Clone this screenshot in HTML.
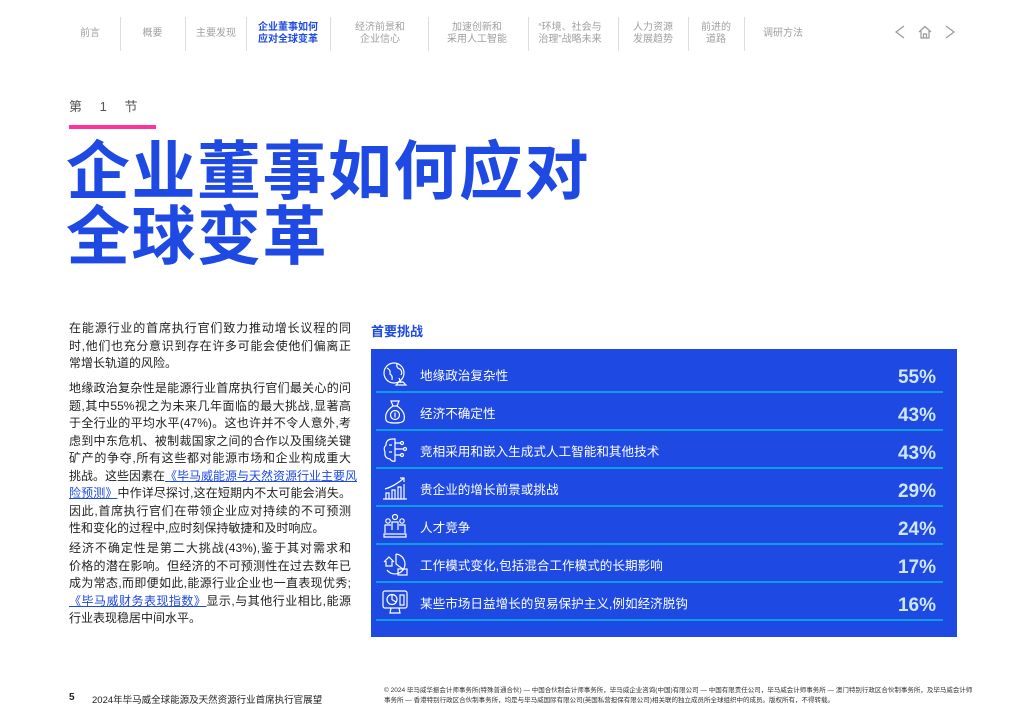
<!DOCTYPE html>
<html><head><meta charset="utf-8"><style>
*{margin:0;padding:0;box-sizing:border-box}
body{width:1024px;height:724px;background:#fff;position:relative;overflow:hidden;font-family:"Liberation Sans","Noto Sans CJK SC",sans-serif;color:#222}
.nav{position:absolute;top:17px;height:34px;font-size:10px;color:#a0a0a0;text-align:center;line-height:12.5px;display:flex;align-items:center;justify-content:center}
.dv{position:absolute;top:17px;width:1px;height:34px;background:#ddd}
.act{color:#1e49e2;font-weight:bold}
.sec{position:absolute;left:69px;top:96px;font-size:13px;color:#555;letter-spacing:7px}
.pink{position:absolute;left:69px;top:125px;width:87px;height:4px;background:#ff3399}
.title{position:absolute;left:66px;top:140px;font-size:64px;line-height:65px;font-weight:bold;color:#1e49e2;letter-spacing:1.5px}
.body{position:absolute;left:69px;width:282px;font-size:12px;line-height:17.5px;color:#222}
.body div{text-align:justify;text-align-last:justify;white-space:nowrap}
.body div.l{text-align-last:left}
.body a{color:#1e49e2;text-decoration:underline}
.sub{position:absolute;left:371px;top:321px;font-size:13px;font-weight:bold;color:#1e49e2}
.tbl{position:absolute;left:371px;top:349px;width:586px;height:288px;background:#1e49e2}
.row{position:absolute;left:5px;width:567px;height:38px;border-bottom:2px solid #0f9be8}
.row .t{position:absolute;left:44px;top:10px;font-size:12.6px;color:#fff}
.row .p{position:absolute;right:7px;top:12px;font-size:19px;font-weight:bold;color:#cfe6ff}
.row svg{position:absolute;left:5px;top:5px}
.foot{position:absolute;top:692px;font-size:9px;color:#222}
</style></head><body>
<div class="nav" style="left:70px;width:40px">前言</div><div class="dv" style="left:120px"></div>
<div class="nav" style="left:130px;width:45px">概要</div><div class="dv" style="left:185px"></div>
<div class="nav" style="left:190px;width:52px">主要发现</div><div class="dv" style="left:246px"></div>
<div class="nav act" style="left:250px;width:76px">企业董事如何<br>应对全球变革</div><div class="dv" style="left:330px"></div>
<div class="nav" style="left:340px;width:80px">经济前景和<br>企业信心</div><div class="dv" style="left:428px"></div>
<div class="nav" style="left:432px;width:90px">加速创新和<br>采用人工智能</div><div class="dv" style="left:528px"></div>
<div class="nav" style="left:530px;width:80px">“环境、社会与<br>治理”战略未来</div><div class="dv" style="left:618px"></div>
<div class="nav" style="left:622px;width:62px">人力资源<br>发展趋势</div><div class="dv" style="left:688px"></div>
<div class="nav" style="left:692px;width:48px">前进的<br>道路</div><div class="dv" style="left:744px"></div>
<div class="nav" style="left:755px;width:56px">调研方法</div>
<svg style="position:absolute;left:892px;top:23px" width="70" height="18" viewBox="0 0 70 18" fill="none" stroke="#999" stroke-width="1.2"><path d="M12 3 L4 9 L12 15"/><path d="M27 9 L33 3.5 L39 9 M29 8 V15 H37 V8 M31.5 15 V11 H34.5 V15"/><path d="M54 3 L62 9 L54 15"/></svg>
<div class="sec">第 1 节</div>
<div class="pink"></div>
<div class="title">企业董事如何应对<br>全球变革</div>
<div class="body" style="top:320px">
<div>在能源行业的首席执行官们致力推动增长议程的同</div>
<div>时,他们也充分意识到存在许多可能会使他们偏离正</div>
<div class="l">常增长轨道的风险。</div>
</div>
<div class="body" style="top:380px">
<div>地缘政治复杂性是能源行业首席执行官们最关心的问</div>
<div>题,其中55%视之为未来几年面临的最大挑战,显著高</div>
<div>于全行业的平均水平(47%)。这也许并不令人意外,考</div>
<div>虑到中东危机、被制裁国家之间的合作以及围绕关键</div>
<div>矿产的争夺,所有这些都对能源市场和企业构成重大</div>
<div>挑战。这些因素在<a>《毕马威能源与天然资源行业主要风</a></div>
<div><a>险预测》</a>中作详尽探讨,这在短期内不太可能会消失。</div>
<div>因此,首席执行官们在带领企业应对持续的不可预测</div>
<div class="l">性和变化的过程中,应时刻保持敏捷和及时响应。</div>
</div>
<div class="body" style="top:540px">
<div>经济不确定性是第二大挑战(43%),鉴于其对需求和</div>
<div>价格的潜在影响。但经济的不可预测性在过去数年已</div>
<div>成为常态,而即便如此,能源行业企业也一直表现优秀;</div>
<div><a>《毕马威财务表现指数》</a>显示,与其他行业相比,能源</div>
<div class="l">行业表现稳居中间水平。</div>
</div>
<div class="sub">首要挑战</div>
<div class="tbl">
<div class="row" style="top:6px"><svg width="28" height="28" viewBox="0 0 28 28" fill="none" stroke="#fff" stroke-width="1.2"><circle cx="13" cy="13" r="10"/><path d="M6 8 Q10 10 9 14 Q12 16 11 20 M16 4 Q15 8 19 9 Q22 12 20 15"/><path d="M18 18 L20 23 M15 25 H25 L22 22 H18 Z"/></svg><span class="t">地缘政治复杂性</span><span class="p">55%</span></div>
<div class="row" style="top:44px"><svg width="28" height="28" viewBox="0 0 28 28" fill="none" stroke="#fff" stroke-width="1.2"><path d="M10 3 H18 L16 8 H12 Z"/><path d="M12 8 Q3 14 5 22 Q6 25 14 25 Q22 25 23 22 Q25 14 16 8"/><circle cx="14" cy="17" r="4.5"/><path d="M14 14.5 V19.5"/></svg><span class="t">经济不确定性</span><span class="p">43%</span></div>
<div class="row" style="top:82px"><svg width="28" height="28" viewBox="0 0 28 28" fill="none" stroke="#fff" stroke-width="1.2"><path d="M12 3 Q5 3 5 9 Q2 12 4 16 Q3 22 9 23 Q11 26 14 25 V3 Z"/><path d="M14 7 H19 M14 13 H22 M14 19 H19 M8 9 H11 M8 16 H11"/><circle cx="21" cy="7" r="1.5"/><circle cx="24" cy="13" r="1.5"/><circle cx="21" cy="19" r="1.5"/></svg><span class="t">竞相采用和嵌入生成式人工智能和其他技术</span><span class="p">43%</span></div>
<div class="row" style="top:120px"><svg width="28" height="28" viewBox="0 0 28 28" fill="none" stroke="#fff" stroke-width="1.2"><path d="M2 25 H26 M5 25 V19 H8 V25 M11 25 V16 H14 V25 M17 25 V13 H20 V25 M23 25 V10"/><path d="M4 15 Q14 12 23 4 M19 4 H23 V8"/></svg><span class="t">贵企业的增长前景或挑战</span><span class="p">29%</span></div>
<div class="row" style="top:158px"><svg width="28" height="28" viewBox="0 0 28 28" fill="none" stroke="#fff" stroke-width="1.2"><circle cx="14" cy="5" r="2.5"/><circle cx="7" cy="9" r="2.2"/><circle cx="21" cy="9" r="2.2"/><path d="M11 18 V10 H17 V18 M4 21 V13 H10 M18 13 H24 V21 M3 22 H25 V25 H3 Z"/></svg><span class="t">人才竞争</span><span class="p">24%</span></div>
<div class="row" style="top:196px"><svg width="28" height="28" viewBox="0 0 28 28" fill="none" stroke="#fff" stroke-width="1.2"><path d="M15 4 A10 10 0 1 1 6 20"/><path d="M15 4 V14 L23 20"/><path d="M3 12 L8 7 L13 12 M5 11 V16 H11 V11"/><rect x="17" y="19" width="9" height="6"/></svg><span class="t">工作模式变化,包括混合工作模式的长期影响</span><span class="p">17%</span></div>
<div class="row" style="top:234px"><svg width="28" height="28" viewBox="0 0 28 28" fill="none" stroke="#fff" stroke-width="1.2"><rect x="2" y="3" width="24" height="17" rx="2"/><path d="M10 20 L9 25 H19 L18 20"/><circle cx="11" cy="11.5" r="5"/><path d="M11 6.5 V11.5 L15 14"/><rect x="19" y="7" width="4" height="10"/></svg><span class="t">某些市场日益增长的贸易保护主义,例如经济脱钩</span><span class="p">16%</span></div>
</div>
<div class="foot" style="left:69px;font-size:10px;font-weight:bold">5</div>
<div class="foot" style="left:92px;font-size:9.5px">2024年毕马威全球能源及天然资源行业首席执行官展望</div>
<div class="foot" style="left:384px;top:686px;font-size:6.5px;line-height:10px;width:590px;color:#333">© 2024 毕马威华振会计师事务所(特殊普通合伙) — 中国合伙制会计师事务所，毕马威企业咨询(中国)有限公司 — 中国有限责任公司，毕马威会计师事务所 — 澳门特别行政区合伙制事务所，及毕马威会计师事务所 — 香港特别行政区合伙制事务所，均是与毕马威国际有限公司(英国私营担保有限公司)相关联的独立成员所全球组织中的成员。版权所有，不得转载。</div>
</body></html>
